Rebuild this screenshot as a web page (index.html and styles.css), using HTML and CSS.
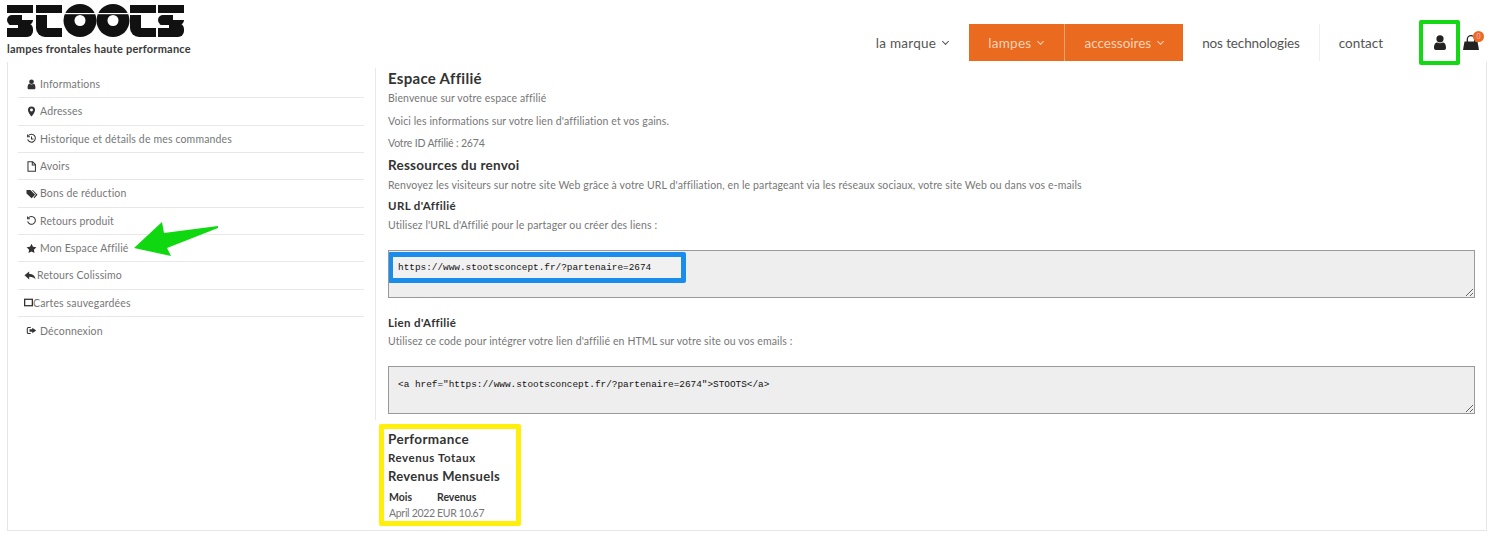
FILE: index.html
```html
<!DOCTYPE html>
<html lang="fr">
<head>
    <meta charset="UTF-8">
    <meta name="viewport" content="width=device-width, initial-scale=1.0">
    <title>Espace Affilié - STOOTS</title>
    <link rel="stylesheet" href="styles.css">
</head>
<body>

<header class="site-header">
    <a class="brand" href="#">
        <svg class="brand-logo" viewBox="0 0 178 34" role="img" aria-label="STOOTS">
            <defs>
                <g id="logo-a">
                    <rect x="0" y="2" width="26" height="8" fill="#111"/>
                    <rect x="0" y="12" width="26" height="10" rx="5" fill="#111"/>
                    <rect x="0" y="20" width="26" height="14" rx="6" fill="#111"/>
                    <rect x="0" y="25" width="18" height="9" fill="#111"/>
                    <rect x="15" y="11" width="12" height="6" fill="#fff"/>
                    <rect x="0" y="22" width="11" height="3" fill="#fff"/>
                </g>
                <g id="logo-b">
                    <rect x="0" y="2" width="26" height="8" fill="#111"/>
                    <rect x="0" y="12" width="20" height="22" rx="9" fill="#111"/>
                    <rect x="0" y="12" width="11" height="9" fill="#111"/>
                    <rect x="11" y="11" width="16" height="14" fill="#fff"/>
                    <rect x="11" y="25" width="15" height="9" fill="#111"/>
                </g>
                <g id="logo-c">
                    <circle cx="16.500" cy="17.500" r="16.500" fill="#111"/>
                    <circle cx="16.500" cy="17.500" r="5.500" fill="#fff"/>
                </g>
            </defs>
            <use href="#logo-a" x="0"/>
            <use href="#logo-b" x="29"/>
            <use href="#logo-c" x="56.500"/>
            <use href="#logo-c" x="89.500"/>
            <use href="#logo-b" x="123"/>
            <use href="#logo-a" x="151"/>
            <rect x="0" y="10" width="178" height="1.200" fill="#fff"/>
        </svg>
        <span class="brand-tagline">lampes frontales haute performance</span>
    </a>

    <nav class="main-nav">
        <a class="nav-item nav-marque" href="#">la marque <span class="chevron"></span></a>
        <a class="nav-item nav-orange nav-lampes" href="#">lampes <span class="chevron"></span></a>
        <a class="nav-item nav-orange nav-access" href="#">accessoires <span class="chevron"></span></a>
        <a class="nav-item nav-split" href="#">nos technologies</a>
        <a class="nav-item" href="#">contact</a>
    </nav>

    <a class="account-link" href="#" aria-label="Mon compte">
        <svg width="12" height="15" viewBox="0 0 12 15"><circle cx="6" cy="3.800" r="3.600" fill="#222"/><path d="M0 13c0-4 1.500-5.500 3.200-5.500 1.600 1 4 1 5.600 0C10.500 7.500 12 9 12 13c0 1.300-.8 2-2 2H2c-1.200 0-2-.7-2-2z" fill="#222"/></svg>
    </a>
    <a class="cart-link" href="#" aria-label="Panier">
        <svg width="16" height="15" viewBox="0 0 16 15"><path d="M4.300 7V4.300a3.700 3.700 0 0 1 7.400 0V7" fill="none" stroke="#222" stroke-width="1.300"/><path d="M1.500 6.500h13L16 15H0z" fill="#222"/></svg>
        <span class="cart-badge">0</span>
    </a>
</header>

<div class="account-frame">
    <aside class="side-col">
        <ul class="side-menu">
            <li><svg class="side-icon" viewBox="0 0 14 14"><circle cx="7" cy="3.500" r="3"/><path d="M2 11c0-3 1-4.500 2.500-4.800 1.500 1 3.500 1 5 0C11 6.500 12 8 12 11c0 1.200-.7 2-2 2H4c-1.300 0-2-.8-2-2z"/></svg>Informations</li>
            <li><svg class="side-icon" viewBox="0 0 14 14"><path fill-rule="evenodd" d="M7 .5A4.500 4.500 0 0 1 11.500 5c0 2.500-2.800 6.500-4.500 8.500C5.300 11.500 2.500 7.500 2.500 5A4.500 4.500 0 0 1 7 .5zm0 2.700a1.900 1.900 0 1 0 0 3.800 1.900 1.900 0 0 0 0-3.800z"/></svg>Adresses</li>
            <li><svg class="side-icon side-line" viewBox="0 0 14 14"><path d="M3 3.500a5 5 0 1 1-.9 4.500"/><path d="M2 1.800v3h3"/><path d="M7 4.500v3h2.500"/></svg>Historique et détails de mes commandes</li>
            <li><svg class="side-icon side-line" viewBox="0 0 14 14"><path d="M2.500 1h6l3.500 3.500V13H2.500z"/><path d="M8 1v4h4"/></svg>Avoirs</li>
            <li><svg class="side-icon side-tags" viewBox="0 0 14 14"><path d="M0 2.500h5l6 6-4.500 4.500-6.500-6z"/><path d="M7 2.500h1l6 6-4 4.500-1-1 3-3.500z"/></svg>Bons de réduction</li>
            <li><svg class="side-icon side-line" viewBox="0 0 14 14"><path d="M3 3.700a5 5 0 1 1-.9 4.500"/><path d="M2 1.800v3h3"/></svg>Retours produit</li>
            <li class="has-arrow"><svg class="side-icon" viewBox="0 0 14 14"><path d="M7 1l1.900 3.900 4.300.6-3.100 3 .7 4.300L7 10.800l-3.800 2 .7-4.300-3.100-3 4.300-.6z"/></svg>Mon Espace Affilié
                <svg class="arrow-note" width="86" height="38" viewBox="0 0 86 38"><polygon points="0,28 28,2 30,13 84,6 84,8 33,28 37,36" fill="#10d810"/></svg>
            </li>
            <li class="item-tight"><svg class="side-icon icon-reply" viewBox="0 0 14 14"><path d="M6 2v3c4.500 0 7.500 2 8 7-1.500-2.500-4-3.500-8-3.500V12L0 6.800z"/></svg>Retours Colissimo</li>
            <li class="item-tight"><svg class="side-icon side-line icon-card" viewBox="0 0 14 14"><rect x="1" y="2" width="12" height="10"/></svg>Cartes sauvegardées</li>
            <li><svg class="side-icon" viewBox="0 0 14 14"><path d="M6 2.500H3a2 2 0 0 0-2 2v5a2 2 0 0 0 2 2h3v-1.300H3.200a.9.900 0 0 1-.9-.9V4.700c0-.5.4-.9.900-.9H6z"/><path d="M8 3.500L13 7l-5 3.500v-2H4.500v-3H8z"/></svg>Déconnexion</li>
        </ul>
    </aside>

    <main class="main-col">
        <div class="main-top">
            <h2 class="title-lg">Espace Affilié</h2>
            <p class="intro">Bienvenue sur votre espace affilié</p>
            <p class="intro">Voici les informations sur votre lien d'affiliation et vos gains.</p>
            <p class="intro id-line">Votre ID Affilié : 2674</p>

            <h3 class="title-md">Ressources du renvoi</h3>
            <p class="note">Renvoyez les visiteurs sur notre site Web grâce à votre URL d'affiliation, en le partageant via les réseaux sociaux, votre site Web ou dans vos e-mails</p>

            <h4 class="title-sm title-url">URL d'Affilié</h4>
            <p class="note">Utilisez l'URL d'Affilié pour le partager ou créer des liens :</p>
            <div class="code-box"><span class="code-highlight">https://www.stootsconcept.fr/?partenaire=2674</span></div>

            <h4 class="title-sm title-link">Lien d'Affilié</h4>
            <p class="note note-link">Utilisez ce code pour intégrer votre lien d'affilié en HTML sur votre site ou vos emails :</p>
            <div class="code-box code-plain">&lt;a href="https://www.stootsconcept.fr/?partenaire=2674"&gt;STOOTS&lt;/a&gt;</div>
        </div>

        <section class="perf-box">
            <h3 class="perf-title">Performance</h3>
            <h4 class="perf-total">Revenus Totaux</h4>
            <h3 class="perf-month">Revenus Mensuels</h3>
            <table class="perf-table">
                <tr><th>Mois</th><th>Revenus</th></tr>
                <tr><td>April 2022</td><td>EUR 10.67</td></tr>
            </table>
        </section>
    </main>
</div>

</body>
</html>
```
FILE: styles.css
```css
* {
    box-sizing: border-box;
}
body {
    margin: 0;
    font-family: Lato, "Open Sans", sans-serif;
    font-size: 11px;
    color: #777;
    background: #fff;
}
a {
    color: inherit;
    text-decoration: none;
}
h2, h3, h4, p, ul {
    margin: 0;
    padding: 0;
}

/* header */
.site-header {
    display: flex;
    align-items: flex-start;
    height: 62px;
    padding-left: 7px;
}
.brand {
    display: block;
    padding-top: 3px;
}
.brand-logo {
    display: block;
    width: 178px;
    height: 34px;
}
.brand-tagline {
    display: block;
    margin-top: 5px;
    font-size: 11px;
    line-height: 14px;
    font-weight: 700;
    color: #3a3a3a;
    letter-spacing: .22px;
}
.main-nav {
    display: flex;
    margin: 24px 0 0 auto;
}
.nav-item {
    display: flex;
    align-items: center;
    gap: 5px;
    height: 37px;
    padding: 0 19px;
    font-size: 13.500px;
    color: #555;
}
.nav-marque {
    letter-spacing: .25px;
}
.nav-orange {
    background: #ea6a20;
    color: #f8d3b8;
}
.nav-lampes {
    letter-spacing: .3px;
}
.nav-access {
    border-left: 1px solid #f1a06f;
}
.nav-access .chevron {
    margin-right: 1px;
}
.nav-split {
    border-right: 1px solid #eee;
    letter-spacing: -.13px;
}
.chevron {
    width: 5px;
    height: 5px;
    margin: -2px 2px 0 2px;
    border-right: 1px solid currentColor;
    border-bottom: 1px solid currentColor;
    transform: rotate(45deg);
}
.account-link {
    display: flex;
    align-items: center;
    justify-content: center;
    width: 41px;
    height: 45px;
    margin: 20px 0 0 17px;
    border: 4px solid #14d814;
    border-radius: 2px;
}
.cart-link {
    position: relative;
    display: block;
    margin: 35px 15px 0 3px;
    height: 15px;
}
.cart-badge {
    position: absolute;
    top: -4px;
    right: -5px;
    width: 11px;
    height: 11px;
    border-radius: 50%;
    background: #ea6a20;
    color: #fbd;
    font-size: 7px;
    line-height: 11px;
    text-align: center;
}

/* frame */
.account-frame {
    display: flex;
    height: 469px;
    margin: 0 7px;
    border: 1px solid #e6e6e6;
    border-top: 0;
}
.side-col {
    width: 367px;
    padding: 9px 11px 0 10px;
}
.side-menu {
    list-style: none;
}
.side-menu li {
    position: relative;
    display: flex;
    align-items: center;
    height: 27.330px;
    padding-left: 8px;
    border-bottom: 1px solid #e8e8e8;
    font-size: 10.500px;
    letter-spacing: .15px;
}
.side-menu li:last-child {
    border-bottom: 0;
}
.side-menu .item-tight {
    padding-left: 6px;
}
.side-icon {
    flex: none;
    width: 11px;
    height: 11px;
    margin-right: 3px;
    fill: #333;
}
.side-line {
    fill: none;
    stroke: #333;
    stroke-width: 1.300;
}
.side-tags {
    width: 12px;
    margin: 0 2px 0 0;
}
.icon-reply {
    width: 12px;
    margin-right: 1px;
}
.icon-card {
    width: 9px;
    height: 9px;
    margin-right: 0;
    stroke-width: 2;
}
.arrow-note {
    position: absolute;
    left: 116px;
    top: -15px;
}

/* main column */
.main-col {
    flex: 1;
    min-width: 0;
    margin-top: 8px;
    padding-right: 11px;
}
.main-top {
    padding: 0 0 6px 12px;
    border-left: 1px solid #e8e8e8;
}
.title-lg {
    margin-top: -2px;
    font-size: 15px;
    line-height: 20px;
    font-weight: 700;
    color: #333;
    letter-spacing: .3px;
}
.intro {
    margin-top: 3px;
    margin-bottom: 8.500px;
    line-height: 14px;
    font-size: 10.500px;
    letter-spacing: .12px;
}
.intro + .intro {
    margin-top: 0;
}
.id-line {
    margin-bottom: 8px;
    letter-spacing: -.18px;
}
.title-md {
    margin-top: -2px;
    font-size: 13.500px;
    line-height: 18px;
    color: #333;
    letter-spacing: .25px;
}
.note {
    margin-top: 4px;
    line-height: 14px;
    font-size: 10.500px;
    letter-spacing: .12px;
}
.title-sm {
    font-size: 11.500px;
    line-height: 16px;
    color: #333;
    letter-spacing: .35px;
}
.title-url {
    margin-top: 6px;
}
.title-link {
    margin-top: 17px;
}
.note-link {
    margin-top: 3px;
}
.code-box {
    height: 48px;
    margin-top: 18px;
    padding: 1px 0 0 0;
    border: 1px solid #999;
    background: #eee;
    font-family: "Liberation Mono", monospace;
    font-size: 9.400px;
    color: #111;
    resize: vertical;
    overflow: auto;
}
.code-highlight {
    display: block;
    width: 298px;
    height: 31px;
    margin-left: -1px;
    padding-left: 5px;
    border: 5px solid #1a8cec;
    border-radius: 2px;
    background: #f1f1f1;
    line-height: 22px;
}
.code-plain {
    padding: 12px 0 0 9px;
    line-height: 12px;
}
.perf-box {
    width: 142px;
    height: 102px;
    margin: 4px 0 0 4px;
    padding: 2px 0 0 4px;
    border: 5px solid #ffef0a;
    border-radius: 2px;
}
.perf-title {
    font-size: 13.500px;
    line-height: 16px;
    color: #333;
    letter-spacing: .35px;
}
.perf-total {
    margin-top: 4px;
    font-size: 11.500px;
    line-height: 14px;
    color: #333;
    letter-spacing: .55px;
}
.perf-month {
    margin-top: 3px;
    font-size: 13px;
    line-height: 16px;
    color: #333;
    letter-spacing: .3px;
}
.perf-table {
    margin: 6px 0 0 1px;
    border-collapse: collapse;
}
.perf-table th, .perf-table td {
    padding: 0;
    text-align: left;
    white-space: nowrap;
    font-size: 10.500px;
    line-height: 14px;
}
.perf-table th {
    width: 48px;
    padding-bottom: 2px;
    color: #333;
}
.perf-table td {
    letter-spacing: -.3px;
}
```
